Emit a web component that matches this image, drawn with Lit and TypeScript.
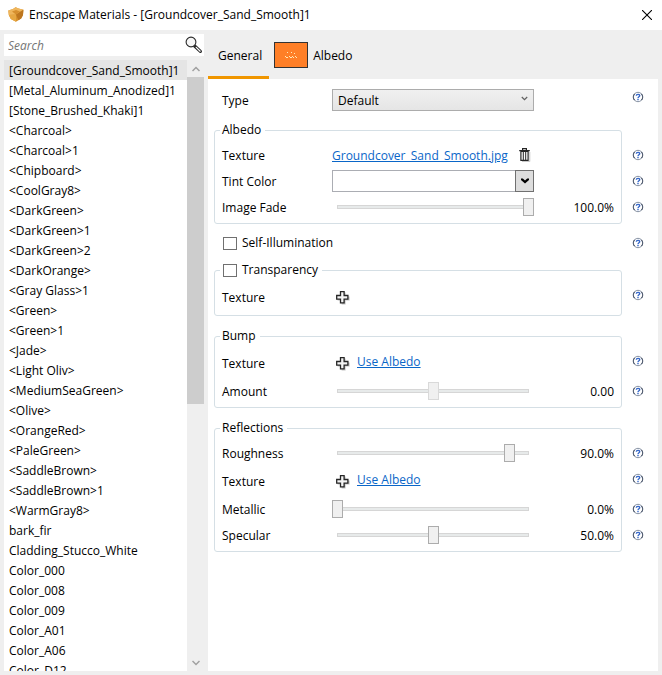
import { LitElement, html, css, svg, nothing } from "lit";
import { customElement, state } from "lit/decorators.js";

const MATERIALS = [
  "[Groundcover_Sand_Smooth]1", "[Metal_Aluminum_Anodized]1", "[Stone_Brushed_Khaki]1",
  "<Charcoal>", "<Charcoal>1", "<Chipboard>", "<CoolGray8>", "<DarkGreen>", "<DarkGreen>1",
  "<DarkGreen>2", "<DarkOrange>", "<Gray Glass>1", "<Green>", "<Green>1", "<Jade>",
  "<Light Oliv>", "<MediumSeaGreen>", "<Olive>", "<OrangeRed>", "<PaleGreen>",
  "<SaddleBrown>", "<SaddleBrown>1", "<WarmGray8>", "bark_fir", "Cladding_Stucco_White",
  "Color_000", "Color_008", "Color_009", "Color_A01", "Color_A06", "Color_D12",
];

const shieldIcon = html`<svg width="16" height="16" viewBox="0 0 16 16" aria-hidden="true">
  <path d="M7.6.2 10.5 1.6 15.4 2.8 15 8 13.2 11.4 8 14.8 2.8 12 .8 8 .3 3.4 5 2Z" fill="#d9922c"/>
  <path d="M7.6.2 5 2 .3 3.4.8 8 8 7.4 15.4 2.8 10.5 1.6Z" fill="#efb65c"/>
  <path d="M.8 8 8 7.4 8 14.8 2.8 12Z" fill="#e6a742"/>
  <path d="M15.4 2.8 8 7.4 10.4 13.2 13.2 11.4 15 8Z" fill="#bd761f"/>
  <path d="M4 4.6 8 3 12 4.4 8 7.4Z" fill="#d68f2e"/>
</svg>`;

const closeIcon = html`<svg width="10" height="10" viewBox="0 0 10 10" aria-hidden="true">
  <path d="M0 0 10 10M10 0 0 10" stroke="#000" stroke-width="1.1" fill="none"/>
</svg>`;

const searchIcon = html`<svg width="18" height="18" viewBox="0 0 18 18" aria-hidden="true">
  <path d="M9.6 10 15.4 15.4" stroke="#2a2a2a" stroke-width="3.2" stroke-linecap="round"/>
  <path d="M11.2 11.4 15.2 15.2" stroke="#fff" stroke-width="1.2" stroke-linecap="round"/>
  <circle cx="6" cy="6" r="4.9" fill="#f6f6f6" stroke="#2a2a2a" stroke-width="1.1"/>
</svg>`;

const trashIcon = html`<svg width="12" height="14" viewBox="0 0 12 14" aria-hidden="true">
  <path d="M3 13.5h7.8V4" stroke="#c8c8c8" fill="none"/>
  <path d="M1.9 3.5h7.2v8.8H1.9Z" fill="#fff" stroke="#262626" stroke-width="1.2"/>
  <path d="M.2 2.6h10.6M3.6 2V.7h3.8V2" stroke="#262626" stroke-width="1.2" fill="none"/>
  <path d="M4.3 4v8M6.7 4v8" stroke="#262626" stroke-width="1"/>
</svg>`;

const plusIcon = html`<svg width="14" height="14" viewBox="0 0 14 14" aria-hidden="true">
  <path d="M5.6 1.6h4v4h4v4h-4v4h-4v-4h-4v-4h4Z" fill="#c4c4c4"/>
  <path d="M4.5.7h3.6v3.8h3.8v3.6H8.1v3.8H4.5V8.1H.7V4.5h3.8Z" fill="#f4f4f4" stroke="#262626" stroke-width="1.3"/>
</svg>`;

const helpIcon = html`<svg width="12" height="12" viewBox="0 0 12 12" aria-hidden="true">
  <circle cx="6" cy="6" r="4.7" fill="#fff" stroke="#8792a3" stroke-width="1"/>
  <path d="M2.6 2.8A4.7 4.7 0 0 0 2.6 9.2M9.4 2.8A4.7 4.7 0 0 1 9.4 9.2" fill="none" stroke="#4a566b" stroke-width="1.1"/>
  <path d="M4.3 4.8C4.3 2.9 7.7 2.9 7.7 4.7 7.7 5.8 6 5.8 6 7.2" fill="none" stroke="#3567c9" stroke-width="1.4"/>
  <path d="M5.3 8h1.4v1.3H5.3Z" fill="#3567c9"/>
</svg>`;

const chevron = (up: boolean, color: string, size = 8) => html`<svg width=${size} height=${size}
  viewBox="0 0 8 8" aria-hidden="true">${up
    ? svg`<path d="M.5 6 4 2.5 7.5 6" fill="none" stroke=${color} stroke-width="1.5"/>`
    : svg`<path d="M.5 2 4 5.5 7.5 2" fill="none" stroke=${color} stroke-width="1.5"/>`}</svg>`;

@customElement("app-root")
export class AppRoot extends LitElement {
  @state() private selected = 0;

  static styles = css`
    :host {
      display: flex;
      flex-direction: column;
      height: 100vh;
      background: #efefef;
      color: #000;
      font: 12px/16px "Open Sans", "Noto Sans", sans-serif;
    }
    * { box-sizing: border-box; }
    svg { display: block; }
    button { padding: 0; border: 0; background: none; font: inherit; color: inherit; }
    a { color: #0a66c8; text-decoration: underline; }

    .titlebar {
      display: flex;
      align-items: center;
      gap: 5px;
      flex: none;
      height: 30px;
      padding: 0 10px 0 8px;
      background: #fff;
    }
    .title { flex: 1; margin: 0; font: inherit; }

    .body { display: flex; flex: 1; gap: 4px; min-height: 0; padding: 0 4px 4px; }

    .sidebar { display: flex; flex-direction: column; gap: 4px; flex: none; width: 200px; padding-top: 4px; }
    .search { display: flex; align-items: center; flex: none; height: 22px; padding: 0 1px 0 4px; background: #fff; }
    .search-input {
      flex: 1;
      min-width: 0;
      padding: 2px 0 0;
      border: 0;
      outline: 0;
      background: none;
      font: inherit;
    }
    .search-input::placeholder { color: #757575; font-style: italic; }
    .list-box { display: flex; flex: 1; min-height: 0; background: #fff; }
    .list { flex: 1; min-width: 0; margin: 0; padding: 0; overflow: hidden; list-style: none; }
    .item { display: block; width: 100%; height: 20px; padding: 2px 5px 0; text-align: left; white-space: nowrap; line-height: 18px; }
    .item.selected { background: #e5e5e5; }
    .scrollbar { display: flex; flex-direction: column; flex: none; width: 17px; background: #efefef; }
    .arrow { display: flex; align-items: center; justify-content: center; flex: none; height: 17px; }
    .track { flex: 1; }
    .thumb { height: 56.7%; background: #cdcdcd; }

    .main { display: flex; flex-direction: column; flex: 1; min-width: 0; }
    .tabs { display: flex; flex: none; height: 49px; }
    .tab { display: flex; align-items: center; gap: 5px; padding: 3px 5px 0; border-bottom: 3px solid transparent; }
    .tab.active { padding: 3px 7px 0 10px; border-color: #f09600; }
    .tab-text { padding-top: 2px; }
    .swatch {
      display: flex;
      align-items: center;
      justify-content: center;
      width: 34px;
      height: 26px;
      border: 1px solid #333;
      background: #ff7f27;
    }

    .panel { flex: 1; padding: 8px 4px 0 6px; background: #fff; }
    .section { display: grid; grid-template-columns: minmax(0, 1fr) 32px; margin-bottom: 12px; }
    .section.tight { margin-bottom: 6px; }
    .section.type { margin-bottom: 9px; }
    .group { min-width: 0; margin: 0; padding: 4px 0 3px; border: 1px solid #d5dfe5; border-radius: 3px; }
    .legend { height: 16px; margin-left: 5px; padding: 0 4px 0 2px; }
    .row {
      display: grid;
      grid-template-columns: 110px 202px 1fr;
      align-items: center;
      height: 26px;
      padding: 0 7px;
    }
    .row.tall { height: 30px; }
    .row.loose { padding: 0 8px; }
    .row.single { display: flex; }
    .name, .value { padding-top: 2px; }
    .value { text-align: right; }
    .helps { display: flex; flex-direction: column; align-items: center; }
    .helps.grouped { padding-top: 20px; }
    .help { display: flex; align-items: center; justify-content: center; width: 20px; height: 26px; }
    .help.tall { margin-bottom: 4px; }
    .type .help { height: 20px; }

    .picker { position: relative; display: flex; }
    .select {
      appearance: none;
      width: 100%;
      height: 22px;
      padding: 2px 5px 0;
      border: 1px solid #acacac;
      border-radius: 0;
      background: linear-gradient(#f0f0f0, #e5e5e5);
      color: #000;
      font: inherit;
    }
    .picker-arrow { position: absolute; right: 6px; top: 7px; pointer-events: none; }
    .color { display: flex; width: 100%; height: 22px; }
    .color-value { flex: 1; border: 1px solid #abadb3; border-right: 0; background: #fff; }
    .color-drop {
      display: flex;
      align-items: center;
      justify-content: center;
      width: 19px;
      border: 1px solid #707070;
      background: #dddddd;
    }
    .file { display: flex; align-items: center; justify-content: space-between; padding-right: 3px; white-space: nowrap; }
    .file-link { padding-top: 2px; }
    .add { display: flex; align-items: center; gap: 7px; padding-left: 4px; }
    .add-button { padding-top: 2px; }
    .add-link { margin-bottom: 2px; }

    .slider { appearance: none; display: block; width: 100%; height: 18px; margin: 0; background: none; }
    .slider::-webkit-slider-runnable-track {
      height: 18px;
      background:
        linear-gradient(#e7eaea, #e7eaea) center / calc(100% - 12px) 2px no-repeat,
        linear-gradient(#d6d6d6, #d6d6d6) center / calc(100% - 10px) 4px no-repeat;
    }
    .slider::-webkit-slider-thumb {
      appearance: none;
      width: 11px;
      height: 18px;
      border: 1px solid #acacac;
      background: #f0f0f0;
    }
    .slider:disabled::-webkit-slider-thumb { border-color: #d9d9d9; }

    .check { display: flex; align-items: center; gap: 5px; height: 16px; white-space: nowrap; }
    .box { appearance: none; flex: none; width: 14px; height: 13px; margin: 0 0 0 1px; border: 1px solid #707070; background: #fff; }
    .box:checked { background: #707070; }
  `;

  private helps(names: string[], grouped = true, tall = -1) {
    return html`<div class="helps ${grouped ? "grouped" : ""}">
      ${names.map((name, i) => html`<button class="help ${i === tall ? "tall" : ""}" aria-label="Help: ${name}">${helpIcon}</button>`)}
    </div>`;
  }

  private slider(id: string, label: string, value: number, text: string, disabled = false) {
    return html`<div class="row">
      <label class="name" for=${id}>${label}</label>
      <input class="slider" id=${id} type="range" min="0" max="100" .value=${String(value)} ?disabled=${disabled} />
      <output class="value" for=${id}>${text}</output>
    </div>`;
  }

  private texture(withAlbedo: boolean) {
    return html`<div class="row tall">
      <span class="name">Texture</span>
      <div class="add">
        <button class="add-button" aria-label="Add texture">${plusIcon}</button>
        ${withAlbedo ? html`<a class="add-link" href="#">Use Albedo</a>` : nothing}
      </div>
    </div>`;
  }

  render() {
    return html`
      <header class="titlebar">
        ${shieldIcon}
        <h1 class="title">Enscape Materials - [Groundcover_Sand_Smooth]1</h1>
        <button aria-label="Close">${closeIcon}</button>
      </header>
      <div class="body">
        <aside class="sidebar">
          <div class="search">
            <input class="search-input" type="text" placeholder="Search" aria-label="Search" />
            <button aria-label="Find">${searchIcon}</button>
          </div>
          <div class="list-box">
            <ul class="list">
              ${MATERIALS.map((name, i) => html`<li>
                <button class="item ${i === this.selected ? "selected" : ""}" @click=${() => (this.selected = i)}>${name}</button>
              </li>`)}
            </ul>
            <div class="scrollbar">
              <span class="arrow">${chevron(true, "#a0a0a0")}</span>
              <div class="track"><div class="thumb"></div></div>
              <span class="arrow">${chevron(false, "#a0a0a0")}</span>
            </div>
          </div>
        </aside>
        <main class="main">
          <nav class="tabs">
            <button class="tab active"><span class="tab-text">General</span></button>
            <button class="tab">
              <span class="swatch"><svg width="14" height="8" viewBox="0 0 14 8" aria-hidden="true">
                <path d="M3 1.5h1M7 1.5h1M10 2.5h1M1 5.5h1M2 6.5h2M5 5.5h1M6 6.5h2M8 5.5h1M9 6.5h1M11 5.5h1M12 6.5h1" stroke="#ffe9b8"/>
              </svg></span>
              <span class="tab-text">Albedo</span>
            </button>
          </nav>
          <div class="panel">
            <div class="section type">
              <div class="row loose">
                <label class="name" for="type">Type</label>
                <div class="picker">
                  <select class="select" id="type"><option>Default</option></select>
                  <span class="picker-arrow"><svg width="7" height="6" viewBox="0 0 7 6" aria-hidden="true">
                    <path d="M.8 1 3.5 3.7 6.2 1" fill="none" stroke="#606060" stroke-width="1.2"/>
                  </svg></span>
                </div>
              </div>
              ${this.helps(["Type"], false)}
            </div>
            <div class="section tight">
              <fieldset class="group">
                <legend class="legend">Albedo</legend>
                <div class="row">
                  <span class="name">Texture</span>
                  <div class="file">
                    <a class="file-link" href="#">Groundcover_Sand_Smooth.jpg</a>
                    <button aria-label="Remove texture">${trashIcon}</button>
                  </div>
                </div>
                <div class="row">
                  <label class="name" for="tint">Tint Color</label>
                  <button class="color" id="tint">
                    <span class="color-value"></span>
                    <span class="color-drop"><svg width="8" height="6" viewBox="0 0 8 6" aria-hidden="true">
                      <path d="M0 .5H1.8L4 2.4 6.2.5H8V2L4 5.6 0 2Z" fill="#000"/>
                    </svg></span>
                  </button>
                </div>
                ${this.slider("fade", "Image Fade", 100, "100.0%")}
              </fieldset>
              ${this.helps(["Texture", "Tint Color", "Image Fade"])}
            </div>
            <div class="section tight">
              <div class="row loose single"><label class="check"><input class="box" type="checkbox" />Self-Illumination</label></div>
              ${this.helps(["Self-Illumination"], false)}
            </div>
            <div class="section">
              <fieldset class="group">
                <legend class="legend"><label class="check"><input class="box" type="checkbox" />Transparency</label></legend>
                ${this.texture(false)}
              </fieldset>
              ${this.helps(["Transparency"], true, 0)}
            </div>
            <div class="section">
              <fieldset class="group">
                <legend class="legend">Bump</legend>
                ${this.texture(true)}
                ${this.slider("amount", "Amount", 50, "0.00", true)}
              </fieldset>
              ${this.helps(["Texture", "Amount"], true, 0)}
            </div>
            <div class="section">
              <fieldset class="group">
                <legend class="legend">Reflections</legend>
                ${this.slider("roughness", "Roughness", 90, "90.0%")}
                ${this.texture(true)}
                ${this.slider("metallic", "Metallic", 0, "0.0%")}
                ${this.slider("specular", "Specular", 50, "50.0%")}
              </fieldset>
              ${this.helps(["Roughness", "Texture", "Metallic", "Specular"], true, 1)}
            </div>
          </div>
        </main>
      </div>
    `;
  }
}
